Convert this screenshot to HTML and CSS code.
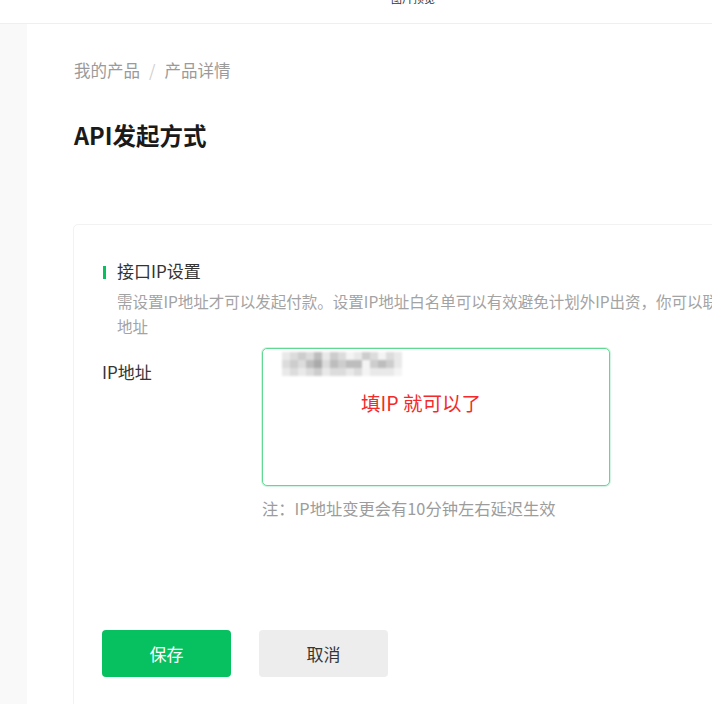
FILE: index.html
```html
<!DOCTYPE html>
<html lang="zh-CN">
<head>
<meta charset="utf-8">
<title>API发起方式</title>
<link rel="stylesheet" href="styles.css">
</head>
<body>
<header class="topbar"><span class="topbar-title">图片预览</span></header>
<div class="layout">
  <aside class="sidebar"></aside>
  <main class="main">
    <nav class="breadcrumb"><span>我的产品</span><span class="sep">/</span><span>产品详情</span></nav>
    <h1 class="page-title">API发起方式</h1>
    <section class="card">
      <h2 class="section-title"><span class="bar"></span>接口IP设置</h2>
      <p class="desc">需设置IP地址才可以发起付款。设置IP地址白名单可以有效避免计划外IP出资，你可以联系管理员设置<br>地址</p>
      <div class="form-row">
        <label class="label">IP地址</label>
        <div class="field">
          <div class="textarea">
            <div class="mosaic">
              <i class="c1"></i><i class="c2"></i><i class="c3"></i><i class="c2"></i><i class="c4"></i><i class="c1"></i><i class="c3"></i><i class="c2"></i><i class="c0"></i><i class="c1"></i><i class="c3"></i><i class="c2"></i><i class="c0"></i><i class="c2"></i><i class="c1"></i>
              <i class="c2"></i><i class="c3"></i><i class="c2"></i><i class="c4"></i><i class="c5"></i><i class="c2"></i><i class="c4"></i><i class="c3"></i><i class="c4"></i><i class="c4"></i><i class="c0"></i><i class="c3"></i><i class="c4"></i><i class="c3"></i><i class="c1"></i>
              <i class="c1"></i><i class="c2"></i><i class="c1"></i><i class="c2"></i><i class="c3"></i><i class="c1"></i><i class="c2"></i><i class="c2"></i><i class="c1"></i><i class="c2"></i><i class="c0"></i><i class="c1"></i><i class="c1"></i><i class="c1"></i><i class="c0"></i>
            </div>
            <span class="hint-red">填IP 就可以了</span>
          </div>
          <p class="note">注：IP地址变更会有10分钟左右延迟生效</p>
        </div>
      </div>
      <div class="actions">
        <button class="btn btn-primary">保存</button>
        <button class="btn btn-default">取消</button>
      </div>
    </section>
  </main>
</div>
</body>
</html>
```

FILE: styles.css
```css
html, body {
  margin: 0;
  padding: 0;
  background: #ffffff;
  overflow: hidden;
  font-family: "Noto Sans CJK SC", "Noto Sans", sans-serif;
  color: #353535;
}

.topbar {
  height: 23px;
  border-bottom: 1px solid #efefef;
  overflow: hidden;
  padding-left: 391px;
}

.topbar-title {
  display: block;
  font-size: 11px;
  line-height: 11px;
  margin-top: -7px;
  color: #333;
}

.layout {
  display: flex;
  min-height: 680px;
}

.sidebar {
  width: 27px;
  flex: none;
  background: #f9f9f9;
}

.main {
  flex: 1;
  padding: 34px 0 0 47px;
  min-width: 0;
}

.breadcrumb {
  font-size: 16.5px;
  line-height: 24px;
  color: #9a9a9a;
  display: flex;
}

.breadcrumb .sep {
  color: #d0d0d0;
  margin: 0 9px;
}

.page-title {
  margin: 37px 0 0 0;
  font-size: 23.5px;
  line-height: 32px;
  font-weight: 700;
  color: #1a1a1a;
}

.card {
  margin: 73px -300px 0 -1px;
  border: 1px solid #f2f2f2;
  border-radius: 5px;
  padding: 34px 0 0 28px;
  min-height: 520px;
}

.section-title {
  margin: 0;
  font-size: 17px;
  line-height: 24px;
  font-weight: 400;
  color: #333;
  display: flex;
  align-items: center;
}

.section-title .bar {
  width: 3px;
  height: 13px;
  background: #07c160;
  margin: 2px 11px 0 1px;
}

.desc {
  margin: 6px 0 0 15px;
  font-size: 15.5px;
  line-height: 25px;
  color: #a3a3a3;
  white-space: nowrap;
}

.form-row {
  display: flex;
  margin-top: 9px;
}

.label {
  width: 160px;
  flex: none;
  font-size: 17px;
  line-height: 24px;
  padding-top: 12px;
  color: #353535;
}

.textarea {
  position: relative;
  box-sizing: border-box;
  width: 348px;
  height: 138px;
  border: 1px solid #62d993;
  border-radius: 5px;
  box-shadow: 0 0 0 1px rgba(7, 193, 96, 0.18);
  background: #fff;
}

.mosaic {
  position: absolute;
  left: 19px;
  top: 3px;
  width: 120px;
  display: grid;
  grid-template-columns: repeat(15, 8px);
  grid-auto-rows: 8px;
  filter: blur(1.2px);
}

.mosaic i { display: block; }
.mosaic .c0 { background: #f4f4f4; }
.mosaic .c1 { background: #e9e9e9; }
.mosaic .c2 { background: #dcdcdc; }
.mosaic .c3 { background: #cdcdcd; }
.mosaic .c4 { background: #bdbdbd; }
.mosaic .c5 { background: #aaaaaa; }

.hint-red {
  position: absolute;
  left: 98px;
  top: 40px;
  font-size: 19.5px;
  line-height: 28px;
  color: #f42a2a;
  white-space: nowrap;
}

.note {
  margin: 10px 0 0 0;
  font-size: 16.3px;
  line-height: 24px;
  color: #9c9c9c;
}

.actions {
  display: flex;
  gap: 28px;
  margin-top: 110px;
}

.btn {
  width: 129px;
  height: 47px;
  border: none;
  border-radius: 4px;
  font-family: "Noto Sans CJK SC", "Noto Sans", sans-serif;
  font-size: 17px;
  padding: 0;
}

.btn-primary {
  background: #07c160;
  color: #ffffff;
}

.btn-default {
  background: #ededed;
  color: #353535;
}
```
